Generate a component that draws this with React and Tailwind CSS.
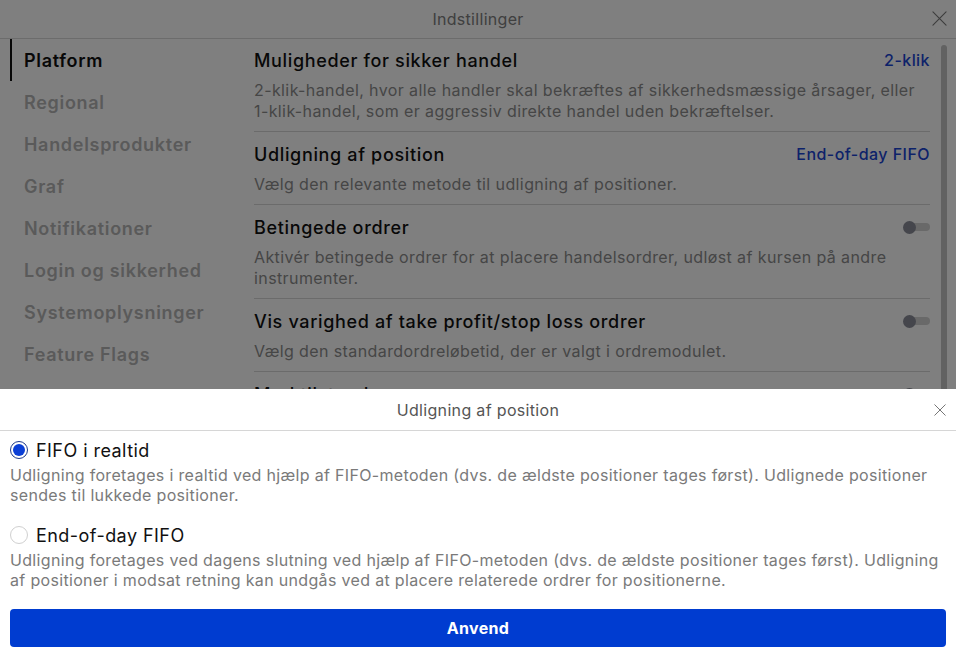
import React from "react";

const navItems = [
    "Platform",
    "Regional",
    "Handelsprodukter",
    "Graf",
    "Notifikationer",
    "Login og sikkerhed",
    "Systemoplysninger",
    "Feature Flags",
];

const settings = [
    {
        title: "Muligheder for sikker handel",
        text: "2-klik-handel, hvor alle handler skal bekræftes af sikkerhedsmæssige årsager, eller 1-klik-handel, som er aggressiv direkte handel uden bekræftelser.",
        value: "2-klik",
    },
    {
        title: "Udligning af position",
        text: "Vælg den relevante metode til udligning af positioner.",
        value: "End-of-day FIFO",
    },
    {
        title: "Betingede ordrer",
        text: "Aktivér betingede ordrer for at placere handelsordrer, udløst af kursen på andre instrumenter.",
        toggle: true,
    },
    {
        title: "Vis varighed af take profit/stop loss ordrer",
        text: "Vælg den standardordreløbetid, der er valgt i ordremodulet.",
        toggle: true,
    },
    {
        title: "Marktilstand",
        text: "Vis marktilstand for instrumenter.",
        toggle: true,
    },
];

const options = [
    {
        label: "FIFO i realtid",
        text: "Udligning foretages i realtid ved hjælp af FIFO-metoden (dvs. de ældste positioner tages først). Udlignede positioner sendes til lukkede positioner.",
        checked: true,
    },
    {
        label: "End-of-day FIFO",
        text: "Udligning foretages ved dagens slutning ved hjælp af FIFO-metoden (dvs. de ældste positioner tages først). Udligning af positioner i modsat retning kan undgås ved at placere relaterede ordrer for positionerne.",
        checked: false,
    },
];

function CloseIcon({ size, color }) {
    return (
        <svg width={size} height={size} viewBox="0 0 16 16" fill="none" stroke={color} strokeWidth="1.2" strokeLinecap="round">
            <path d="M1 1L15 15M15 1L1 15" />
        </svg>
    );
}

function Toggle() {
    return (
        <div className="relative flex h-[14px] w-[27px] items-center">
            <div className="ml-[3px] h-[8px] w-[24px] rounded-full bg-[#d2d2d2]" />
            <div className="absolute left-0 top-[1px] h-[13px] w-[13px] rounded-full bg-[#8a8d98]" />
        </div>
    );
}

export default function App() {
    return (
        <div className="relative h-[657px] w-[956px] overflow-hidden bg-white font-['Inter','Noto_Sans',sans-serif]">
            {/* settings page underneath */}
            <header className="relative flex h-[39px] items-center justify-center border-b border-[#d9d9d9]">
                <span className="text-[16px] tracking-[0.3px] text-[#808080]">Indstillinger</span>
                <button className="absolute right-[9px] top-[11px]">
                    <CloseIcon size={15} color="#7a7a7a" />
                </button>
            </header>

            <div className="flex">
                <nav className="w-[254px] shrink-0 pl-[10px]">
                    {navItems.map((item, index) => (
                        <div
                            key={item}
                            className={
                                index === 0
                                    ? "flex h-[42px] items-center border-l-2 border-[#111] pl-[12px] text-[18px] font-semibold tracking-[0.7px] text-[#111]"
                                    : "flex h-[42px] items-center border-l-2 border-transparent pl-[12px] text-[18px] font-semibold tracking-[0.7px] text-[#b5b5b5]"
                            }
                        >
                            {item}
                        </div>
                    ))}
                </nav>

                <main className="flex-1">
                    {settings.map((item, index) => (
                        <div
                            key={item.title}
                            className={
                                index === 0
                                    ? "border-b border-[#d6d6d6] pt-[9px] pb-[9px]"
                                    : "border-b border-[#d6d6d6] pt-[10px] pb-[9px]"
                            }
                        >
                            <div className="flex h-[24px] items-center justify-between">
                                <span className="text-[18px] font-medium tracking-[0.65px] text-[#111]">{item.title}</span>
                                {item.value && (
                                    <span className="text-[16px] font-medium tracking-[0.45px] text-[#1a45d4]">{item.value}</span>
                                )}
                                {item.toggle && <Toggle />}
                            </div>
                            <p className="mt-[8px] pr-[8px] text-[16px] leading-[21px] tracking-[0.4px] text-[#8c8c8c]">{item.text}</p>
                        </div>
                    ))}
                </main>

                <div className="w-[26px] shrink-0 pl-[11px] pt-[6px]">
                    <div className="h-[400px] w-[6px] rounded-full bg-[#c4c4c4]" />
                </div>
            </div>

            {/* backdrop */}
            <div className="absolute inset-0 bg-black/50" />

            {/* bottom sheet */}
            <div className="absolute inset-x-0 bottom-0 top-[389px] bg-white">
                <div className="relative flex h-[42px] items-center justify-center border-b border-[#d6d6d6]">
                    <span className="text-[16px] tracking-[0.33px] text-[#555]">Udligning af position</span>
                    <button className="absolute right-[10px] top-[15px]">
                        <CloseIcon size={12} color="#666" />
                    </button>
                </div>

                <div className="px-[10px]">
                    {options.map((option, index) => (
                        <div key={option.label} className={index === 0 ? "mt-[7px]" : "mt-[18px]"}>
                            <label className="flex h-[24px] items-center gap-[8px]">
                                {option.checked ? (
                                    <span className="flex h-[18px] w-[18px] items-center justify-center rounded-full border border-[#1e3a8a] bg-white">
                                        <span className="h-[12px] w-[12px] rounded-full bg-[#0b3fd6]" />
                                    </span>
                                ) : (
                                    <span className="h-[18px] w-[18px] rounded-full border border-[#d0d0d0] bg-white" />
                                )}
                                <span className="text-[18px] tracking-[0.45px] text-[#111]">{option.label}</span>
                            </label>
                            <p className="mt-[3px] text-[16px] leading-[20px] tracking-[0.33px] text-[#7a7a7a]">{option.text}</p>
                        </div>
                    ))}

                    <button className="mt-[19px] flex h-[38px] w-full items-center justify-center rounded-[4px] bg-[#003cd0] text-[16px] font-bold tracking-[0.3px] text-white">
                        Anvend
                    </button>
                </div>
            </div>
        </div>
    );
}
